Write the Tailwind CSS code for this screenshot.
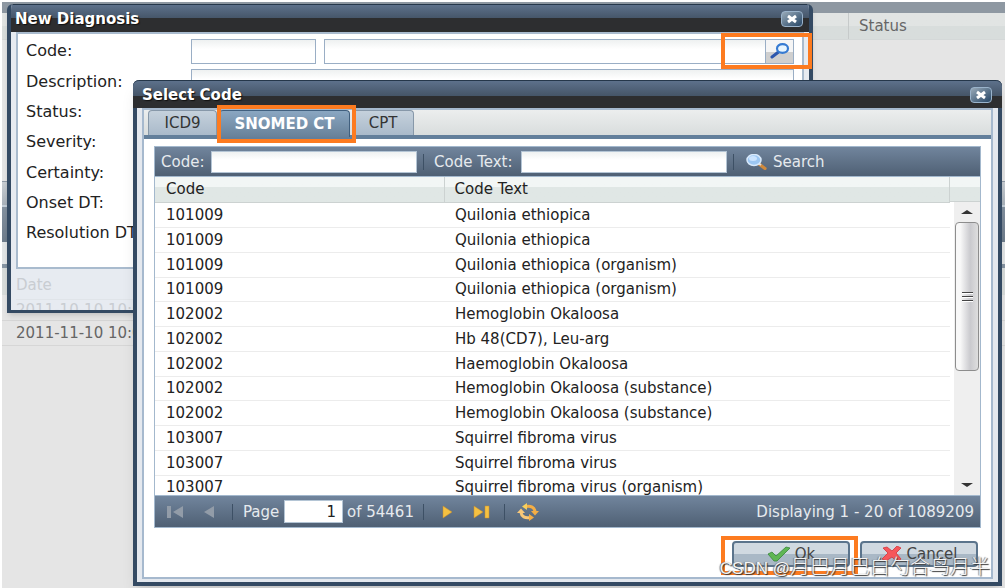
<!DOCTYPE html>
<html lang="en">
<head>
<meta charset="utf-8">
<title>Select Code</title>
<script src="https://cdn.jsdelivr.net/npm/@tailwindcss/browser@4"></script>
</head>
<body class="relative h-screen overflow-hidden bg-white pl-0.5 pt-0.5 font-['DejaVu_Sans','Liberation_Sans',sans-serif] text-[15px] leading-5 text-[#222]">

<!-- Desktop behind the windows -->
<main class="flex h-full flex-col bg-[#e5e5e5]">
  <div class="h-[11px] bg-[#8e98a2]"></div>
  <div class="flex h-[27px] items-center border-b border-[#d4d8d8] bg-linear-to-b from-[#e1e4e3] from-50% to-[#d8dddc] to-50% text-[#666]">
    <span class="flex-1"></span>
    <span class="flex h-full w-[157px] items-center border-l border-[#c6caca] pl-2.5">Status</span>
  </div>
  <div class="h-[141px]"></div>
  <div class="h-6 border-t border-[#8f9aa6] bg-linear-to-b from-[#c9ced3] to-[#aab3bc]"></div>
  <div class="h-[37px] border-t-2 border-[#c5d0da] bg-linear-to-b from-[#8492a1] to-[#6f7d8c]"></div>
  <div class="h-[22px] bg-[#e2e5e6]"></div>
  <div class="h-1 bg-[#8795a3]"></div>
  <div class="h-[27px] bg-[#d8dcdb]"></div>
  <div class="h-[26px] border-b border-[#d6d6d6]"></div>
  <div class="h-[25px] border-b border-[#d6d6d6] pl-3.5 leading-6 text-[#666]">2011-11-10 10:00</div>
</main>

<!-- New Diagnosis window -->
<section aria-label="New Diagnosis" class="absolute left-[7px] right-48 top-1 h-[309px] overflow-hidden rounded-t-md border-x-4 border-b-[3px] border-[#344a63] bg-[#e7ebf1] shadow-md">
  <header class="-mx-1 flex h-7 items-center justify-between border-t border-[#25374a] bg-linear-to-b from-[#5d718b] from-0% via-[#455568] via-50% to-[#2d2e30] to-50% pl-2 pr-2.5 font-bold text-white">
    <h2 class="[text-shadow:1px_1px_1px_#111]">New Diagnosis</h2>
    <button aria-label="Close" class="flex h-4 w-[22px] items-center justify-center rounded-sm border border-[#9ab3cb] bg-linear-to-br from-[#9aabb9] to-[#274766]">
      <svg width="12" height="10" viewBox="0 0 12 10"><path d="M2 2l8 6M10 2l-8 6" stroke="#fff" stroke-width="3"/></svg>
    </button>
  </header>
  <form class="ml-[5px] mr-[5px] h-[237px] border-2 border-[#a9bbce] bg-white pl-2 pr-2 pt-0.5 text-base">
    <div class="flex h-[30px] items-center">
      <label for="d-code" class="w-[165px] shrink-0">Code:</label>
      <input id="d-code" class="h-[25px] w-[125px] border border-[#9aaec5] bg-linear-to-b from-[#eef1f1] to-white to-40%">
      <input aria-label="Code text" class="ml-2 h-[25px] min-w-0 flex-1 border border-[#9aaec5] bg-linear-to-b from-[#eef1f1] to-white to-40%">
      <button type="button" aria-label="Find code" class="flex h-[25px] w-7 items-center justify-center border border-l-0 border-[#9aaec5] bg-linear-to-b from-[#f5f5f5] from-50% to-[#cfcfcf] to-50%">
        <svg width="20" height="16" viewBox="0 0 20 16" fill="none"><path d="M8.500 9L2 14" stroke="#2d57ad" stroke-width="3" stroke-linecap="round"/><ellipse cx="12.500" cy="5.500" rx="5.500" ry="4.300" fill="#e7f5ff" stroke="#377bd2" stroke-width="2.200"/></svg>
      </button>
    </div>
    <div class="flex h-[31px] items-center">
      <label for="d-desc" class="w-[165px] shrink-0">Description:</label>
      <input id="d-desc" class="h-[25px] min-w-0 flex-1 border border-[#9aaec5] bg-linear-to-b from-[#eef1f1] to-white to-40%">
    </div>
    <div class="flex h-[30px] items-center">Status:</div>
    <div class="flex h-[30px] items-center">Severity:</div>
    <div class="flex h-[31px] items-center">Certainty:</div>
    <div class="flex h-[30px] items-center">Onset DT:</div>
    <div class="flex h-[30px] items-center">Resolution DT:</div>
  </form>
  <div class="px-[5px] pt-1.5 text-[#c9cdd2]">
    <div class="h-[25px] border-b border-[#e0e4e9]">Date</div>
    <div>2011-10-10 10:00</div>
  </div>
</section>

<!-- Select Code window -->
<section aria-label="Select Code" class="absolute bottom-0.5 left-[133px] right-[3px] top-20 flex flex-col rounded-t-md border-x-4 border-b-4 border-[#344a63] bg-[#e4e8ee] shadow-lg">
  <header class="-mx-1 flex h-7 shrink-0 items-center justify-between rounded-t-md border-t border-[#25374a] bg-linear-to-b from-[#5d718b] from-0% via-[#455568] via-55% to-[#2d2e30] to-55% pl-[9px] pr-2.5 font-bold text-white">
    <h1 class="[text-shadow:1px_1px_1px_#111]">Select Code</h1>
    <button aria-label="Close" class="flex h-4 w-[22px] items-center justify-center rounded-sm border border-[#9ab3cb] bg-linear-to-br from-[#9aabb9] to-[#274766]">
      <svg width="12" height="10" viewBox="0 0 12 10"><path d="M2 2l8 6M10 2l-8 6" stroke="#fff" stroke-width="3"/></svg>
    </button>
  </header>
  <div class="mx-[5px] mb-[3px] flex min-h-0 flex-1 flex-col border-2 border-[#a6b9ce] bg-white">
    <nav role="tablist" class="flex h-[29px] shrink-0 items-end gap-0.5 border-b-4 border-[#637f9b] bg-linear-to-b from-[#eceeee] to-[#d9dddd] pl-1">
      <button role="tab" class="h-[25px] w-[69px] rounded-t border border-b-0 border-[#8798a9] bg-linear-to-b from-[#c5d1dc] to-[#aabaca] text-[#333]">ICD9</button>
      <button role="tab" aria-selected="true" class="-mb-0.5 h-[27px] w-[131px] rounded-t border border-b-0 border-[#405f7e] bg-linear-to-b from-[#8aa7c2] to-[#688199] font-bold text-white">SNOMED CT</button>
      <button role="tab" class="h-[25px] w-[62px] rounded-t border border-b-0 border-[#8798a9] bg-linear-to-b from-[#c5d1dc] to-[#aabaca] text-[#333]">CPT</button>
    </nav>
    <div class="mx-[10px] mt-[7px] flex h-[382px] shrink-0 flex-col border border-[#a3b8cd]">
      <div class="flex h-[30px] shrink-0 items-center border-b border-[#a3b8cd] bg-linear-to-b from-[#71859d] to-[#4f6074] pl-1.5 text-[#e6eaee]">
        <label for="q-code" class="w-[50px]">Code:</label>
        <input id="q-code" class="h-[22px] w-[206px] border border-[#b4c5d5] bg-linear-to-b from-[#eef1f1] to-white to-40%">
        <span class="mx-1.5 h-4 w-px bg-[#3d5065]"></span>
        <label for="q-text" class="w-[91px] whitespace-nowrap pl-1">Code Text:</label>
        <input id="q-text" class="h-[22px] w-[206px] border border-[#b4c5d5] bg-linear-to-b from-[#eef1f1] to-white to-40%">
        <span class="mx-1.5 h-4 w-px bg-[#3d5065]"></span>
        <button class="flex items-center gap-1.5 pl-1.5">
          <svg width="21" height="16" viewBox="0 0 21 16"><path d="M13 10l6 4.500" stroke="#d18a3c" stroke-width="3.200" stroke-linecap="round"/><path d="M12 9l3 2" stroke="#ddd" stroke-width="2"/><ellipse cx="8" cy="6" rx="7" ry="5.500" fill="#9cc7f3" stroke="#d8e9fb" stroke-width="1.500"/><ellipse cx="7" cy="4.500" rx="4" ry="2.500" fill="#cbe4ff"/></svg>
          Search
        </button>
      </div>
      <div class="flex min-h-0 flex-1 overflow-hidden">
        <table class="w-full table-fixed self-start border-collapse text-left [&_td]:border-b [&_td]:border-[#ececec] [&_td]:px-[11px] [&_td]:py-0 [&_td]:leading-5">
          <thead>
            <tr class="h-[25px] bg-linear-to-b from-[#f2f6f5] from-40% to-[#e0e7e5] to-40%">
              <th class="w-[289px] border-b border-r border-[#ccd2d1] px-[11px] font-normal">Code</th>
              <th class="border-b border-r border-[#ccd2d1] px-2.5 font-normal">Code Text</th>
            </tr>
          </thead>
          <tbody class="[&_tr]:h-[25px] [&_tr:nth-child(4n)]:h-6">
            <tr><td>101009</td><td>Quilonia ethiopica</td></tr>
            <tr><td>101009</td><td>Quilonia ethiopica</td></tr>
            <tr><td>101009</td><td>Quilonia ethiopica (organism)</td></tr>
            <tr><td>101009</td><td>Quilonia ethiopica (organism)</td></tr>
            <tr><td>102002</td><td>Hemoglobin Okaloosa</td></tr>
            <tr><td>102002</td><td>Hb 48(CD7), Leu-arg</td></tr>
            <tr><td>102002</td><td>Haemoglobin Okaloosa</td></tr>
            <tr><td>102002</td><td>Hemoglobin Okaloosa (substance)</td></tr>
            <tr><td>102002</td><td>Hemoglobin Okaloosa (substance)</td></tr>
            <tr><td>103007</td><td>Squirrel fibroma virus</td></tr>
            <tr><td>103007</td><td>Squirrel fibroma virus</td></tr>
            <tr><td>103007</td><td>Squirrel fibroma virus (organism)</td></tr>
          </tbody>
        </table>
        <div class="flex w-[30px] shrink-0 flex-col">
          <div class="h-[25px] border-b border-[#ccd2d1] bg-linear-to-b from-[#f2f6f5] from-40% to-[#e0e7e5] to-40%"></div>
          <div class="ml-1 flex flex-1 flex-col items-center bg-[#efefef]">
            <svg class="my-2 shrink-0" width="12" height="4" viewBox="0 0 12 4"><path d="M0 4L6 0l6 4z" fill="#333"/></svg>
            <div class="flex h-[149px] w-6 shrink-0 flex-col items-center justify-center gap-0.5 rounded-sm border border-[#8d8d8d] bg-linear-to-r from-[#f8f8f8] from-20% via-[#cacace] via-65% to-[#dedede]">
              <span class="h-0.5 w-[11px] border-b border-white bg-[#444]"></span>
              <span class="h-0.5 w-[11px] border-b border-white bg-[#444]"></span>
              <span class="h-0.5 w-[11px] border-b border-white bg-[#444]"></span>
            </div>
            <span class="flex-1"></span>
            <svg class="my-2 shrink-0" width="12" height="4" viewBox="0 0 12 4"><path d="M0 0h12L6 4z" fill="#333"/></svg>
          </div>
        </div>
      </div>
      <div class="flex h-8 shrink-0 items-center border-t border-[#a3b8cd] bg-linear-to-b from-[#71859d] to-[#4f6074] pl-3 pr-1.5 text-[#e6eaee]">
        <button aria-label="First page"><svg width="17" height="14" viewBox="0 0 17 14" fill="#929ca8"><path d="M0 1h4v12H0zM16 1v12L6 7z"/></svg></button>
        <button aria-label="Previous page" class="ml-5"><svg width="11" height="14" viewBox="0 0 11 14" fill="#929ca8"><path d="M10 1v12L0 7z"/></svg></button>
        <span class="ml-[17px] mr-2.5 h-4 w-px bg-[#3d5065]"></span>
        <label for="page" class="w-[41px]">Page</label>
        <input id="page" value="1" class="h-[23px] w-[59px] border border-[#b4c5d5] bg-white pr-1.5 text-right text-[#222]">
        <span class="ml-1 w-[76px] whitespace-nowrap">of 54461</span>
        <span class="mr-[18px] h-4 w-px bg-[#3d5065]"></span>
        <button aria-label="Next page"><svg width="11" height="14" viewBox="0 0 11 14"><path d="M1 1v12l9-6z" fill="#f5c142" stroke="#c98d28" stroke-width=".5"/></svg></button>
        <button aria-label="Last page" class="ml-5"><svg width="17" height="14" viewBox="0 0 17 14"><path d="M1 1v12l9-6zM12 1h4v12h-4z" fill="#f5c142" stroke="#c98d28" stroke-width=".5"/></svg></button>
        <span class="ml-[14px] mr-3 h-4 w-px bg-[#3d5065]"></span>
        <button aria-label="Refresh"><svg width="22" height="18" viewBox="0 0 22 18"><path d="M9 3.500c5-1 8.500 1 9 5" fill="none" stroke="#f4ae45" stroke-width="3"/><path d="M14 8h8l-4 4.500z" fill="#f4ae45"/><path d="M10 0v7L5 3.500z" fill="#f8cf5c"/><path d="M13 14.500c-5 1-8.500-1-9-5" fill="none" stroke="#f9c878" stroke-width="3"/><path d="M8 10H0l4-4.500z" fill="#f9c878"/><path d="M12 18v-7l5 3.500z" fill="#f4ae45"/></svg></button>
        <span class="ml-auto">Displaying 1 - 20 of 1089209</span>
      </div>
    </div>
    <div class="mt-[13px] flex shrink-0 justify-end gap-2.5 pr-[13px]">
      <button class="flex h-[26px] w-[118px] items-center justify-center gap-1 rounded border-2 border-[#5b748c] bg-linear-to-b from-[#d0d9e1] from-50% to-[#a9b8c6] to-50% text-[#444]">
        <svg width="24" height="16" viewBox="0 0 24 16"><path d="M1 8l4-2 4 4L19 1l4 1L10 15H7z" fill="#5fb653" stroke="#37873a" stroke-width=".8"/></svg>Ok
      </button>
      <button class="flex h-[26px] w-[118px] items-center justify-center gap-1 rounded border-2 border-[#5b748c] bg-linear-to-b from-[#d0d9e1] from-50% to-[#a9b8c6] to-50% text-[#444]">
        <svg width="22" height="16" viewBox="0 0 22 16"><path d="M2 2l4-1 5 4 5-5 4 2-5 5 5 6-4 3-5-5-6 4-4-2 6-6z" fill="#f6575b" stroke="#d3343b" stroke-width=".8"/></svg>Cancel
      </button>
    </div>
  </div>
</section>

<!-- Highlight frames and watermark laid over the windows -->
<div class="absolute right-[193px] top-[33px] h-9 w-[91px] border-4 border-[#fd7b20]"></div>
<div class="absolute left-[217px] top-[105px] h-[38px] w-[139px] border-4 border-[#fd7b20]"></div>
<div class="absolute bottom-[13px] right-[147px] h-[39px] w-[137px] border-4 border-[#fd7b20]"></div>
<p class="absolute bottom-[7px] right-[15px] whitespace-nowrap font-['Liberation_Sans','Noto_Sans_CJK_SC',sans-serif] text-xl leading-6 font-light text-[#f4f4f4] [text-shadow:1px_1px_1px_#333,-1px_0_1px_#777]"><span class="text-[17px]">CSDN @</span>月巴月巴白勺合鸟月半</p>
</body>
</html>
